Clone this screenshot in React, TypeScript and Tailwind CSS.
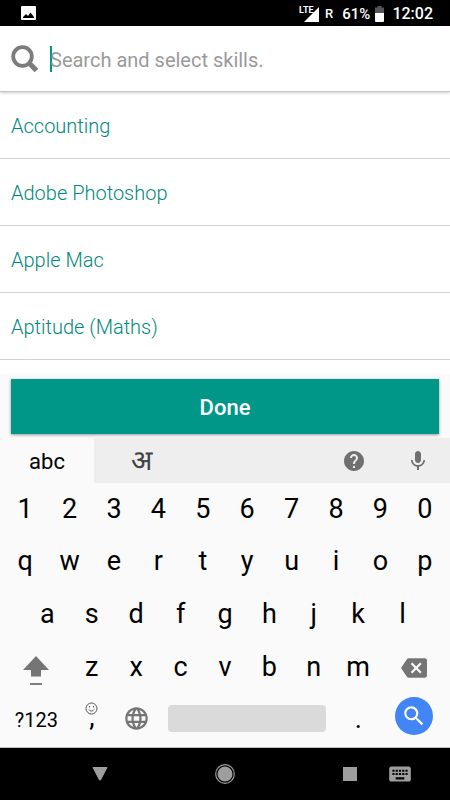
import { useState } from "react";
import { MdBackspace, MdHelp, MdKeyboard, MdLanguage, MdMic, MdSearch } from "react-icons/md";

const skills = ["Accounting", "Adobe Photoshop", "Apple Mac", "Aptitude (Maths)"];

const digits = ["1", "2", "3", "4", "5", "6", "7", "8", "9", "0"];
const topRow = ["q", "w", "e", "r", "t", "y", "u", "i", "o", "p"];
const homeRow = ["a", "s", "d", "f", "g", "h", "j", "k", "l"];
const bottomRow = ["z", "x", "c", "v", "b", "n", "m"];

function StatusBar() {
  return (
    <header className="flex h-[26px] items-center justify-between bg-black pr-[17px] pl-[21px] text-white">
      <svg width="15" height="14" viewBox="0 0 15 14" aria-label="Image notification">
        <rect width="15" height="14" rx="1" fill="#fff" />
        <path d="M2 12v-1l3-3 2 2 2.500-3.500L13 11v1z" fill="#000" />
      </svg>
      <div className="flex items-center pt-0.5">
        {/* Signal with the network type over its corner */}
        <div className="relative mr-[6px] h-4 w-5">
          <span className="absolute top-0 left-0 font-['Liberation_Sans_Narrow','Roboto',sans-serif] text-[9px] leading-[8px] font-bold">LTE</span>
          <svg className="absolute right-0 bottom-0" width="15" height="15" viewBox="0 0 15 15">
            <path d="M15 0v15H0z" fill="#fff" />
          </svg>
        </div>
        <span className="mr-[9px] text-[13px] font-medium">R</span>
        <span className="mr-[5px] text-[15px] font-medium">61%</span>
        <svg className="mr-2" width="9" height="16" viewBox="0 0 9 16">
          <path d="M2.500 0h4v1.500H9V7H0V1.500h2.500z" fill="#555" />
          <path d="M0 7h9v8a1 1 0 0 1-1 1H1a1 1 0 0 1-1-1z" fill="#fff" />
        </svg>
        <span className="text-base font-medium">12:02</span>
      </div>
    </header>
  );
}

function Key({ label, onPress }: { label: string; onPress: (k: string) => void }) {
  return (
    <button onClick={() => onPress(label)} className="col-span-2 text-center text-[27px] leading-8">
      {label}
    </button>
  );
}

export default function App() {
  const [query, setQuery] = useState("");
  const press = (k: string) => setQuery(query + k);
  const visible = skills.filter((s) => s.toLowerCase().includes(query.toLowerCase()));

  return (
    <div className="flex min-h-screen flex-col bg-white font-[Roboto,sans-serif] text-black">
      <StatusBar />

      {/* Search */}
      <div className="flex h-[66px] items-center border-b border-[#c4c4c4] pl-[11px] shadow-[0_1px_3px_rgba(0,0,0,0.2)]">
        <svg width="28" height="28" viewBox="0 0 28 28" fill="none" stroke="#7c7c7c">
          <circle cx="11.500" cy="11.500" r="9.300" strokeWidth="3.800" />
          <path d="M17.500 17.500 25.500 25.500" strokeWidth="5.200" />
        </svg>
        <span className="ml-[11px] h-[26px] w-0.5 bg-[#009688]" />
        <input
          type="text"
          aria-label="Search skills"
          placeholder="Search and select skills."
          value={query}
          onChange={(e) => setQuery(e.target.value)}
          className="-ml-0.5 min-w-0 flex-1 pt-[3px] text-xl caret-[#009688] outline-none placeholder:text-[#9a9a9a]"
        />
      </div>

      {/* Skills */}
      <ul className="grow pb-[14px]">
        {visible.map((s) => (
          <li key={s} className="border-b border-[#d2d2d2]">
            <button className="h-[66px] w-full px-[11px] pt-0.5 text-left text-xl font-light text-[#00897b]">{s}</button>
          </li>
        ))}
      </ul>

      <div className="bg-[#fafafa] px-[11px] pt-[5px] pb-1">
        <button className="h-[55px] w-full bg-[#009688] pt-0.5 text-[22px] font-medium text-white shadow-[0_1px_3px_rgba(0,0,0,0.4)]">
          Done
        </button>
      </div>

      {/* Keyboard */}
      <div className="bg-[#fafafa]">
        <div className="flex h-[45px] items-stretch bg-[#eeeeee] text-[#707070]">
          <button className="w-[94px] rounded-t-sm bg-[#fafafa] pt-0.5 text-[22px] text-black">abc</button>
          <button className="w-[94px] text-[28px] leading-8 text-[#424242]" lang="hi">अ</button>
          <div className="ml-auto flex items-center gap-10 pr-5">
            <button aria-label="Help"><MdHelp size={24} /></button>
            <button aria-label="Voice input"><MdMic size={24} /></button>
          </div>
        </div>

        <div className="px-[3px]">
          <div className="grid h-[51px] grid-cols-20">
            {digits.map((k) => <Key key={k} label={k} onPress={press} />)}
          </div>
          <div className="grid h-[53px] grid-cols-20">
            {topRow.map((k) => <Key key={k} label={k} onPress={press} />)}
          </div>
          <div className="grid h-[53px] grid-cols-20">
            <span />
            {homeRow.map((k) => <Key key={k} label={k} onPress={press} />)}
          </div>
          <div className="grid h-[53px] grid-cols-20">
            <button aria-label="Shift" className="col-span-3 grid place-items-center pt-2">
              <svg width="26" height="30" viewBox="0 0 26 30">
                <path d="M13 0 26 14h-8v6.500H8V14H0z" fill="#757575" />
                <path d="M7 28h12" stroke="#555" strokeWidth="1.500" />
              </svg>
            </button>
            {bottomRow.map((k) => <Key key={k} label={k} onPress={press} />)}
            <button aria-label="Backspace" className="col-span-3 grid place-items-center pt-0.5 text-[#757575]" onClick={() => setQuery(query.slice(0, -1))}>
              <MdBackspace size={26} />
            </button>
          </div>
          <div className="grid h-[54px] grid-cols-20 pb-[3px]">
            <button className="col-span-3 pt-0.5 text-xl">?123</button>
            <button className="col-span-2 flex flex-col items-center pt-[9px]" onClick={() => press(",")}>
              <svg width="13" height="13" viewBox="0 0 13 13" fill="none" stroke="#555">
                <circle cx="6.500" cy="6.500" r="5.500" />
                <path d="M4 7.500c.8 2 4.200 2 5 0M4.500 4v1.500M8.500 4v1.500" />
              </svg>
              <span className="-mt-1.5 text-[27px] leading-4">,</span>
            </button>
            <button aria-label="Language" className="col-span-2 grid place-items-center text-[#757575]">
              <MdLanguage size={27} />
            </button>
            <button aria-label="Space" className="col-span-8 px-2.5" onClick={() => press(" ")}>
              <span className="block h-[27px] rounded bg-[#dadada]" />
            </button>
            <Key label="." onPress={press} />
            <button aria-label="Search" className="col-span-3 grid place-items-center">
              <span className="mb-1.5 grid size-[38px] place-items-center rounded-full bg-[#4285f4] text-white">
                <MdSearch size={26} />
              </span>
            </button>
          </div>
        </div>
      </div>

      {/* System navigation */}
      <nav className="grid h-[53px] grid-cols-18 items-center justify-items-center border-t border-[#bdbdbd] bg-black text-[#9e9e9e]">
        <button aria-label="Back" className="col-span-2 col-start-4">
          <svg width="16" height="14" viewBox="0 0 16 14">
            <path d="M1 .5h14L8.500 13h-1z" fill="currentColor" stroke="currentColor" strokeLinejoin="round" />
          </svg>
        </button>
        <button aria-label="Home" className="col-span-2 col-start-9">
          <svg width="20" height="20" viewBox="0 0 20 20">
            <circle cx="10" cy="10" r="9.300" fill="none" stroke="currentColor" strokeWidth="1.200" />
            <circle cx="10" cy="10" r="7.500" fill="currentColor" />
          </svg>
        </button>
        <button aria-label="Recent apps" className="col-span-2 col-start-14">
          <span className="block size-[14px] bg-[#9e9e9e]" />
        </button>
        <button aria-label="Switch keyboard" className="col-span-2 col-start-16">
          <MdKeyboard size={26} />
        </button>
      </nav>
    </div>
  );
}
